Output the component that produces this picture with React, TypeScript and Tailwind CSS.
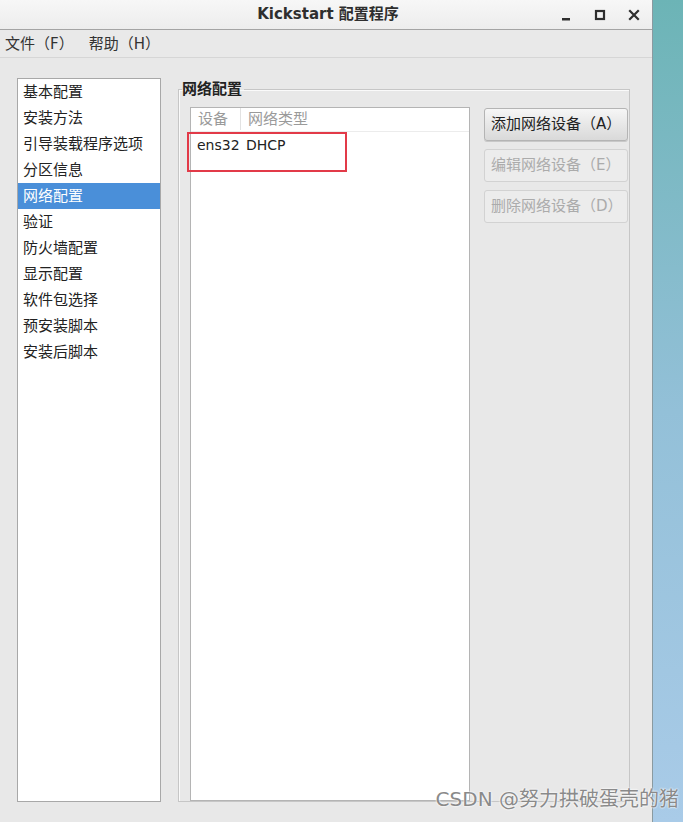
import React from "react";

const sections = [
  "基本配置",
  "安装方法",
  "引导装载程序选项",
  "分区信息",
  "网络配置",
  "验证",
  "防火墙配置",
  "显示配置",
  "软件包选择",
  "预安装脚本",
  "安装后脚本",
];

const font = { fontFamily: '"DejaVu Sans", "Noto Sans CJK SC", sans-serif' };

const WindowControls: React.FC = () => (
  <div className="flex items-center gap-[18px] pr-[10px]">
    <svg width="16" height="16" viewBox="0 0 16 16">
      <rect x="4" y="11" width="8" height="2.5" fill="#2e2e2e" />
    </svg>
    <svg width="16" height="16" viewBox="0 0 16 16">
      <rect x="4" y="4" width="8" height="8" fill="none" stroke="#2e2e2e" strokeWidth="2.2" />
    </svg>
    <svg width="16" height="16" viewBox="0 0 16 16">
      <path d="M4 4 L12 12 M12 4 L4 12" stroke="#2e2e2e" strokeWidth="2.2" strokeLinecap="square" />
    </svg>
  </div>
);

const App: React.FC = () => {
  return (
    <div className="relative flex h-[822px] w-[683px] overflow-hidden" style={font}>
      <div className="flex h-full w-[653px] flex-col border-r border-[#8a9aa0] bg-[#e8e8e8]">
        <div className="relative flex h-[30px] items-center justify-end border-b border-[#a4a4a4] bg-gradient-to-b from-[#f7f7f7] to-[#ededed]">
          <span className="absolute left-0 right-0 pl-[4px] text-center text-[15px] font-semibold text-[#2e2e2e]">
            Kickstart 配置程序
          </span>
          <WindowControls />
        </div>
        <div className="flex h-[28px] items-center gap-[15px] border-b border-[#d6d6d6] bg-[#e9e9e9] pl-[5px] pt-[2px] text-[15px] text-[#333]">
          <span>文件（F）</span>
          <span>帮助（H）</span>
        </div>
        <div className="flex flex-1 gap-[17px] pb-[20px] pl-[17px] pt-[20px]">
          <div className="w-[144px] border border-[#a8a8a8] bg-white">
            {sections.map((s) => (
              <div
                key={s}
                className={
                  s === "网络配置"
                    ? "flex h-[26px] items-center bg-[#4a8fd9] pl-[5px] text-[15px] text-white"
                    : "flex h-[26px] items-center pl-[5px] text-[15px] text-[#222]"
                }
              >
                {s}
              </div>
            ))}
          </div>
          <fieldset className="w-[451px] border border-[#c6c6c6] shadow-[inset_1px_1px_0_#fafafa]">
            <legend className="ml-[3px] pr-[2px] text-[15px] font-bold text-[#222]">网络配置</legend>
            <div className="flex h-full gap-[14px] pl-[11px] pr-[1px] pt-[6px]">
              <div className="relative flex w-[280px] flex-col border border-[#b4b4b4] bg-white">
                <div className="flex h-[24px] items-center border-b border-[#ececec] text-[15px] text-[#9a9a9a]">
                  <span className="w-[50px] border-r border-[#e2e2e2] pl-[7px]">设备</span>
                  <span className="pl-[7px]">网络类型</span>
                </div>
                <div className="flex h-[27px] items-center text-[14px] text-[#222]">
                  <span className="w-[55px] pl-[6px]">ens32</span>
                  <span>DHCP</span>
                </div>
                <div className="absolute left-[-4px] top-[24px] h-[40px] w-[160px] border-[2.5px] border-[#e23a48]" />
              </div>
              <div className="flex w-[144px] flex-col gap-[8px] pt-[1px]">
                <button
                  type="button"
                  className="h-[33px] rounded-[3px] border border-[#b4b4b4] bg-gradient-to-b from-[#f6f6f6] to-[#d9d9d9] pl-[6px] text-left text-[15px] text-[#222] shadow-[0_1px_0_#c8c8c8]"
                >
                  添加网络设备（A）
                </button>
                <button
                  type="button"
                  disabled
                  className="h-[33px] rounded-[3px] border border-[#d2d2d2] bg-[#ececec] pl-[6px] text-left text-[15px] text-[#ababab]"
                >
                  编辑网络设备（E）
                </button>
                <button
                  type="button"
                  disabled
                  className="h-[33px] rounded-[3px] border border-[#d2d2d2] bg-[#ececec] pl-[6px] text-left text-[15px] text-[#ababab]"
                >
                  删除网络设备（D）
                </button>
              </div>
            </div>
          </fieldset>
        </div>
      </div>
      <div className="h-full w-[30px] bg-gradient-to-b from-[#6cb4b6] via-[#93c0d8] to-[#a9cbe8]" />
      <span className="absolute bottom-[8px] right-[4px] text-[20px] text-[#8a8a8a] [text-shadow:0_0_2px_#fff,0_0_2px_#fff]">
        CSDN @努力拱破蛋壳的猪
      </span>
    </div>
  );
};

export default App;
